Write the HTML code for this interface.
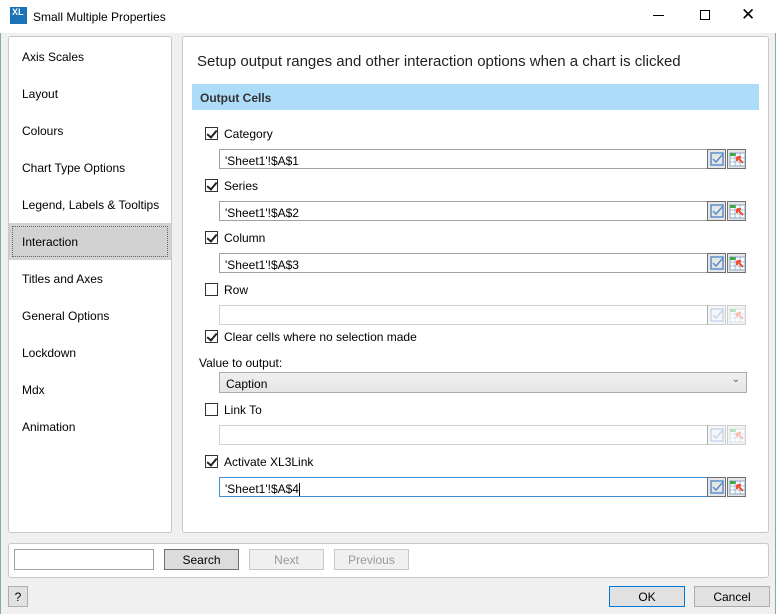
<!DOCTYPE html>
<html><head><style>
*{box-sizing:border-box}
body{margin:0;width:776px;height:614px;overflow:hidden;background:#f0f0f0;font-family:"Liberation Sans",sans-serif;font-size:12px;color:#000;position:relative}
.a{position:absolute}
.panel{position:absolute;background:#fff;border:1px solid #c8c8c8;border-radius:3px}
.nav{position:absolute;left:22px;font-size:12px;margin-top:1px}
.cb{position:absolute;width:13px;height:13px;border:1px solid #333;background:#fff}
.cb.k::after{content:"";position:absolute;left:3px;top:0px;width:4px;height:8px;border:solid #222;border-width:0 2px 2px 0;transform:rotate(40deg)}
.lbl{position:absolute;left:224px;margin-top:1px}
.inp{position:absolute;left:219px;width:489px;height:20px;border:1px solid #a0a0a0;background:#fff;padding:4px 5px 2px;font-size:12px}
.ic{position:absolute;width:19px;height:20px;border:1px solid #6e6e6e;background:#e6e6e6}
.dis{opacity:.35}
.btn{position:absolute;height:21px;border:1px solid #adadad;background:#e1e1e1;text-align:center;line-height:21px;font-size:12px}
</style></head><body>
<div class="a" style="left:0;top:0;width:776px;height:33px;background:#fff"></div>
<div class="a" style="left:10px;top:7px;width:17px;height:17px;background:#1a73b8;color:#fff;font-size:9px;font-weight:bold;line-height:10px;padding-left:2px">XL</div>
<div class="a" style="left:33px;top:10px;font-size:12px">Small Multiple Properties</div>
<div class="a" style="left:653px;top:15px;width:11px;height:1px;background:#000"></div>
<div class="a" style="left:700px;top:10px;width:10px;height:10px;border:1px solid #000"></div>
<div class="a" style="left:741px;top:5px;font-size:17px;line-height:20px">✕</div>
<div class="a" style="left:0;top:33px;width:1px;height:581px;background:#8aa"></div>
<div class="a" style="left:775px;top:33px;width:1px;height:581px;background:#8aa"></div>

<div class="panel" style="left:8px;top:36px;width:164px;height:497px"></div>
<div class="a" style="left:9px;top:223px;width:162px;height:37px;background:#d2d2d2"></div>
<div class="a" style="left:12px;top:226px;width:156px;height:31px;border:1px dotted #666"></div>
<div class="nav" style="top:49px">Axis Scales</div>
<div class="nav" style="top:86px">Layout</div>
<div class="nav" style="top:123px">Colours</div>
<div class="nav" style="top:160px">Chart Type Options</div>
<div class="nav" style="top:197px">Legend, Labels &amp; Tooltips</div>
<div class="nav" style="top:234px">Interaction</div>
<div class="nav" style="top:271px">Titles and Axes</div>
<div class="nav" style="top:308px">General Options</div>
<div class="nav" style="top:345px">Lockdown</div>
<div class="nav" style="top:382px">Mdx</div>
<div class="nav" style="top:419px">Animation</div>

<div class="panel" style="left:182px;top:36px;width:587px;height:497px"></div>
<div class="a" style="left:197px;top:53px;font-size:15px;color:#222">Setup output ranges and other interaction options when a chart is clicked</div>
<div class="a" style="left:192px;top:84px;width:567px;height:26px;background:#addcf9;padding:7px 8px 0;font-weight:bold;color:#333">Output Cells</div>

<div class="cb k" style="left:205px;top:127px"></div><div class="lbl" style="top:126px">Category</div>
<div class="inp" style="top:149px">'Sheet1'!$A$1</div>
<div class="cb k" style="left:205px;top:179px"></div><div class="lbl" style="top:178px">Series</div>
<div class="inp" style="top:201px">'Sheet1'!$A$2</div>
<div class="cb k" style="left:205px;top:231px"></div><div class="lbl" style="top:230px">Column</div>
<div class="inp" style="top:253px">'Sheet1'!$A$3</div>
<div class="cb" style="left:205px;top:283px"></div><div class="lbl" style="top:282px">Row</div>
<div class="inp" style="top:305px;border-color:#d0d0d0"></div>
<div class="cb k" style="left:205px;top:330px"></div><div class="lbl" style="top:329px">Clear cells where no selection made</div>
<div class="a" style="left:199px;top:356px">Value to output:</div>
<div class="a" style="left:219px;top:372px;width:528px;height:21px;border:1px solid #acacac;background:linear-gradient(#f0f0f0,#e5e5e5);padding:4px 6px 0">Caption<span style="position:absolute;right:6px;top:1px;font-size:10px;color:#555">⌄</span></div>
<div class="cb" style="left:205px;top:403px"></div><div class="lbl" style="top:402px">Link To</div>
<div class="inp" style="top:425px;border-color:#d0d0d0"></div>
<div class="cb k" style="left:205px;top:455px"></div><div class="lbl" style="top:454px">Activate XL3Link</div>
<div class="inp" style="top:477px;border-color:#3c8fd8">'Sheet1'!$A$4<span style="display:inline-block;width:1px;height:13px;background:#000;vertical-align:middle"></span></div>

<svg width="0" height="0" style="position:absolute"><defs>
<g id="c"><rect x="3" y="3" width="12" height="12" fill="none" stroke="#5b8fc8" stroke-width="1.5"/><path d="M5 9l3 3 7-8" fill="none" stroke="#5b8fc8" stroke-width="1.5"/></g>
<g id="g"><rect x="2" y="3" width="15" height="13" fill="#fff" stroke="#8aa8c8"/><rect x="2" y="3" width="6" height="3" fill="#3aa83a"/><path d="M2 8h15M2 12h15M7 3v13M12 3v13" stroke="#8aa8c8" stroke-width=".8"/><path d="M9 7l6 6M9 7h4M9 7v4" stroke="#f05030" stroke-width="2"/></g>
</defs></svg>
<div class="ic" style="left:707px;top:149px"><svg width="18" height="18"><use href="#c"/></svg></div>
<div class="ic" style="left:727px;top:149px"><svg width="18" height="18"><use href="#g"/></svg></div>
<div class="ic" style="left:707px;top:201px"><svg width="18" height="18"><use href="#c"/></svg></div>
<div class="ic" style="left:727px;top:201px"><svg width="18" height="18"><use href="#g"/></svg></div>
<div class="ic" style="left:707px;top:253px"><svg width="18" height="18"><use href="#c"/></svg></div>
<div class="ic" style="left:727px;top:253px"><svg width="18" height="18"><use href="#g"/></svg></div>
<div class="ic dis" style="left:707px;top:305px"><svg width="18" height="18"><use href="#c"/></svg></div>
<div class="ic dis" style="left:727px;top:305px"><svg width="18" height="18"><use href="#g"/></svg></div>
<div class="ic dis" style="left:707px;top:425px"><svg width="18" height="18"><use href="#c"/></svg></div>
<div class="ic dis" style="left:727px;top:425px"><svg width="18" height="18"><use href="#g"/></svg></div>
<div class="ic" style="left:707px;top:477px"><svg width="18" height="18"><use href="#c"/></svg></div>
<div class="ic" style="left:727px;top:477px"><svg width="18" height="18"><use href="#g"/></svg></div>

<div class="panel" style="left:8px;top:543px;width:761px;height:35px"></div>
<div class="a" style="left:14px;top:549px;width:140px;height:21px;border:1px solid #a0a0a0;background:#fff"></div>
<div class="btn" style="left:164px;top:549px;width:75px;border-color:#707070;background:#dcdcdc">Search</div>
<div class="btn" style="left:249px;top:549px;width:75px;border-color:#c8c8c8;background:#f0f0f0;color:#999">Next</div>
<div class="btn" style="left:334px;top:549px;width:75px;border-color:#c8c8c8;background:#f0f0f0;color:#999">Previous</div>
<div class="btn" style="left:8px;top:586px;width:20px">?</div>
<div class="btn" style="left:609px;top:586px;width:76px;border-color:#0078d7">OK</div>
<div class="btn" style="left:694px;top:586px;width:76px">Cancel</div>
</body></html>
